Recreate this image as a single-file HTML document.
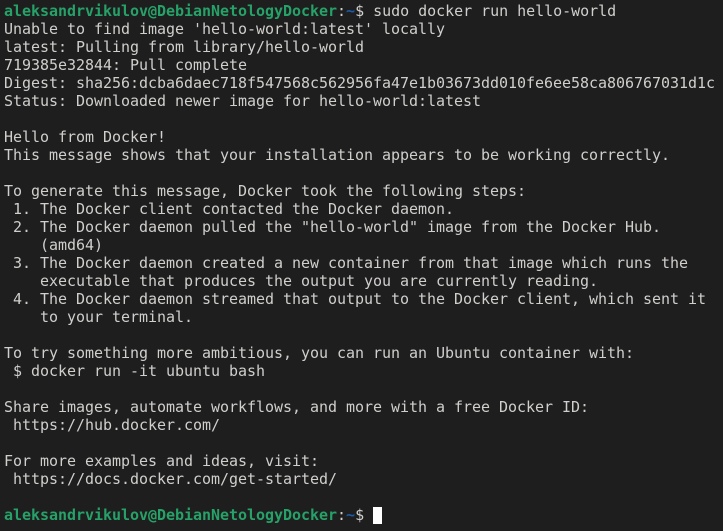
<!DOCTYPE html>
<html><head><style>
html,body{margin:0;padding:0;background:#1e1e1e;width:723px;height:531px;overflow:hidden}
pre{margin:0;padding:2px 0 0 4px;font-family:"DejaVu Sans Mono","Liberation Mono",monospace;font-size:15px;line-height:18px;color:#d0cfcc;white-space:pre;letter-spacing:-0.03px}
.g{color:#26a269;font-weight:bold}.b{color:#1d5aa8;font-weight:bold}
.c{display:inline-block;width:9px;height:17px;background:#fff;vertical-align:-4px}
</style></head><body><pre><span class="g">aleksandrvikulov@DebianNetologyDocker</span>:<span class="b">~</span>$ sudo docker run hello-world
Unable to find image 'hello-world:latest' locally
latest: Pulling from library/hello-world
719385e32844: Pull complete
Digest: sha256:dcba6daec718f547568c562956fa47e1b03673dd010fe6ee58ca806767031d1c
Status: Downloaded newer image for hello-world:latest

Hello from Docker!
This message shows that your installation appears to be working correctly.

To generate this message, Docker took the following steps:
 1. The Docker client contacted the Docker daemon.
 2. The Docker daemon pulled the "hello-world" image from the Docker Hub.
    (amd64)
 3. The Docker daemon created a new container from that image which runs the
    executable that produces the output you are currently reading.
 4. The Docker daemon streamed that output to the Docker client, which sent it
    to your terminal.

To try something more ambitious, you can run an Ubuntu container with:
 $ docker run -it ubuntu bash

Share images, automate workflows, and more with a free Docker ID:
 https://hub.docker.com/

For more examples and ideas, visit:
 https://docs.docker.com/get-started/

<span class="g">aleksandrvikulov@DebianNetologyDocker</span>:<span class="b">~</span>$ <span class="c"></span></pre></body></html>
